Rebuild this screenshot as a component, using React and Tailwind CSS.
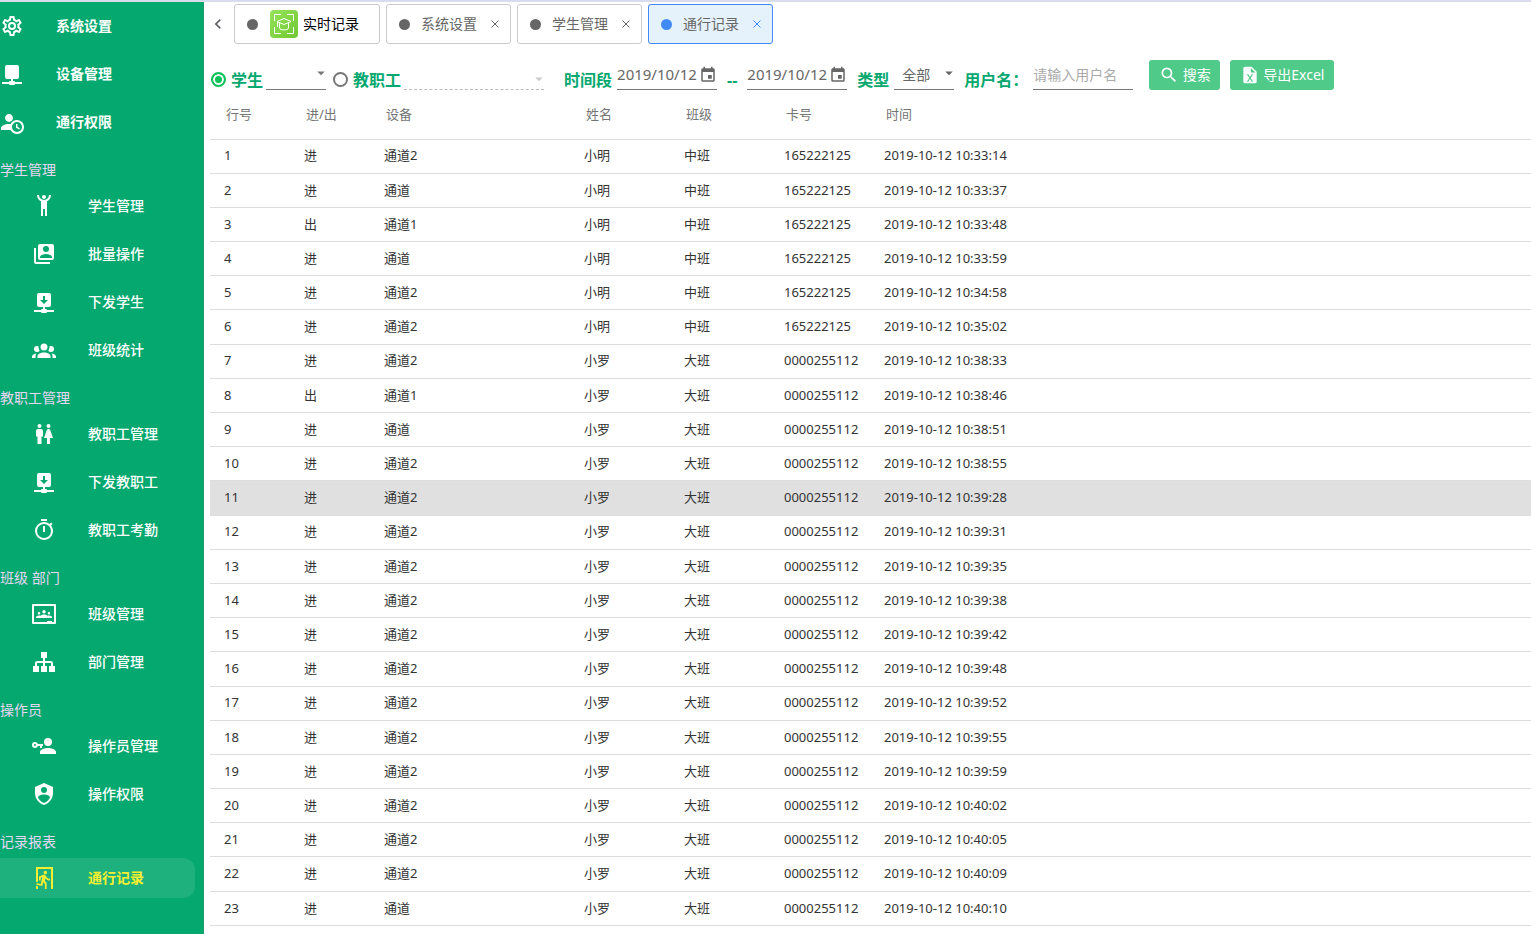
import { useState } from "react";
import { MdEvent, MdSearch, MdArrowDropDown, MdChevronLeft } from "react-icons/md";

const ICONS = {
  cog: "M12,8A4,4 0 0,1 16,12A4,4 0 0,1 12,16A4,4 0 0,1 8,12A4,4 0 0,1 12,8M12,10A2,2 0 0,0 10,12A2,2 0 0,0 12,14A2,2 0 0,0 14,12A2,2 0 0,0 12,10M10,22C9.75,22 9.54,21.82 9.5,21.58L9.13,18.93C8.5,18.68 7.96,18.34 7.44,17.94L4.95,18.95C4.73,19.03 4.46,18.95 4.34,18.73L2.34,15.27C2.21,15.05 2.27,14.78 2.46,14.63L4.57,12.97L4.5,12L4.57,11L2.46,9.37C2.27,9.22 2.21,8.95 2.34,8.73L4.34,5.27C4.46,5.05 4.73,4.96 4.95,5.05L7.44,6.05C7.96,5.66 8.5,5.32 9.13,5.07L9.5,2.42C9.54,2.18 9.75,2 10,2H14C14.25,2 14.46,2.18 14.5,2.42L14.87,5.07C15.5,5.32 16.04,5.66 16.56,6.05L19.05,5.05C19.27,4.96 19.54,5.05 19.66,5.27L21.66,8.73C21.79,8.95 21.73,9.22 21.54,9.37L19.43,11L19.5,12L19.43,13L21.54,14.63C21.73,14.78 21.79,15.05 21.66,15.27L19.66,18.73C19.54,18.95 19.27,19.04 19.05,18.95L16.56,17.95C16.04,18.34 15.5,18.68 14.87,18.93L14.5,21.58C14.46,21.82 14.25,22 14,22H10M11.25,4L10.88,6.61C9.68,6.86 8.62,7.5 7.85,8.39L5.44,7.35L4.69,8.65L6.8,10.2C6.4,11.37 6.4,12.64 6.8,13.8L4.68,15.36L5.43,16.66L7.86,15.62C8.63,16.5 9.68,17.14 10.87,17.38L11.24,20H12.76L13.13,17.39C14.32,17.14 15.37,16.5 16.14,15.62L18.57,16.66L19.32,15.36L17.2,13.81C17.6,12.64 17.6,11.37 17.2,10.2L19.31,8.65L18.56,7.35L16.15,8.39C15.38,7.5 14.32,6.86 13.12,6.62L12.75,4H11.25Z",
  device: "M15,20A1,1 0 0,0 14,19H13V17H17A2,2 0 0,0 19,15V5A2,2 0 0,0 17,3H7A2,2 0 0,0 5,5V15A2,2 0 0,0 7,17H11V19H10A1,1 0 0,0 9,20H2V22H9A1,1 0 0,0 10,23H14A1,1 0 0,0 15,22H22V20H15Z",
  download: "M15,20A1,1 0 0,0 14,19H13V17H17A2,2 0 0,0 19,15V5A2,2 0 0,0 17,3H7A2,2 0 0,0 5,5V15A2,2 0 0,0 7,17H11V19H10A1,1 0 0,0 9,20H2V22H9A1,1 0 0,0 10,23H14A1,1 0 0,0 15,22H22V20H15M11,6H13V10H16L12,14L8,10H11V6Z",
  accountClock: "M10.63,14.1C12.23,10.58 16.38,9.03 19.9,10.63C23.42,12.23 24.97,16.38 23.37,19.9C22.24,22.4 19.75,24 17,24C14.3,24 11.83,22.44 10.67,20H1V18C1.06,16.86 1.84,15.93 3.34,15.18C4.84,14.43 6.72,14.04 9,14C9.57,14 10.11,14.05 10.63,14.1V14.1M9,4C10.12,4.03 11.06,4.42 11.81,5.17C12.56,5.92 12.93,6.86 12.93,8C12.93,9.14 12.56,10.08 11.81,10.83C11.06,11.58 10.12,11.95 9,11.95C7.88,11.95 6.94,11.58 6.19,10.83C5.44,10.08 5.07,9.14 5.07,8C5.07,6.86 5.44,5.92 6.19,5.17C6.94,4.42 7.88,4.03 9,4M17,22A5,5 0 0,0 22,17A5,5 0 0,0 17,12A5,5 0 0,0 12,17A5,5 0 0,0 17,22M16,14H17.5V16.82L19.94,18.23L19.19,19.53L16,17.69V14Z",
  handsUp: "M5,1C5,3.7 6.56,6.16 9,7.32V22H11V15H13V22H15V7.31C17.44,6.16 19,3.7 19,1H17A5,5 0 0,1 12,6A5,5 0 0,1 7,1M12,1C10.89,1 10,1.89 10,3C10,4.11 10.89,5 12,5C13.11,5 14,4.11 14,3C14,1.89 13.11,1 12,1Z",
  accountBoxes: "M4,6H2V20A2,2 0 0,0 4,22H18V20H4V6M20,2A2,2 0 0,1 22,4V16A2,2 0 0,1 20,18H8A2,2 0 0,1 6,16V4A2,2 0 0,1 8,2H20M17,7A3,3 0 0,0 14,4A3,3 0 0,0 11,7A3,3 0 0,0 14,10A3,3 0 0,0 17,7M8,15V16H20V15C20,13 16,11.9 14,11.9C12,11.9 8,13 8,15Z",
  group: "M12,5.5A3.5,3.5 0 0,1 15.5,9A3.5,3.5 0 0,1 12,12.5A3.5,3.5 0 0,1 8.5,9A3.5,3.5 0 0,1 12,5.5M5,8C5.56,8 6.08,8.15 6.53,8.42C6.38,9.85 6.8,11.27 7.66,12.38C7.16,13.34 6.16,14 5,14A3,3 0 0,1 2,11A3,3 0 0,1 5,8M19,8A3,3 0 0,1 22,11A3,3 0 0,1 19,14C17.84,14 16.84,13.34 16.34,12.38C17.2,11.27 17.62,9.85 17.47,8.42C17.92,8.15 18.44,8 19,8M5.5,18.25C5.5,16.18 8.41,14.5 12,14.5C15.59,14.5 18.5,16.18 18.5,18.25V20H5.5V18.25M0,20V18.5C0,17.11 1.89,15.94 4.45,15.6C3.86,16.28 3.5,17.22 3.5,18.25V20H0M24,20H20.5V18.25C20.5,17.22 20.14,16.28 19.55,15.6C22.11,15.94 24,17.11 24,18.5V20Z",
  maleFemale: "M7.5,2A2,2 0 0,1 9.5,4A2,2 0 0,1 7.5,6A2,2 0 0,1 5.5,4A2,2 0 0,1 7.5,2M6,7H9A2,2 0 0,1 11,9V14.5H9.5V22H5.5V14.5H4V9A2,2 0 0,1 6,7M16.5,2A2,2 0 0,1 18.5,4A2,2 0 0,1 16.5,6A2,2 0 0,1 14.5,4A2,2 0 0,1 16.5,2M15,22V16H12L14.59,8.41C14.84,7.59 15.6,7 16.5,7C17.4,7 18.16,7.59 18.41,8.41L21,16H18V22H15Z",
  timer: "M12,20A7,7 0 0,1 5,13A7,7 0 0,1 12,6A7,7 0 0,1 19,13A7,7 0 0,1 12,20M19.03,7.39L20.45,5.97C20,5.46 19.55,5 19.04,4.56L17.62,6C16.07,4.74 14.12,4 12,4A9,9 0 0,0 3,13A9,9 0 0,0 12,22C17,22 21,17.97 21,13C21,10.88 20.26,8.93 19.03,7.39M11,14H13V8H11M15,1H9V3H15V1Z",
  classroom: "M23,2H1A1,1 0 0,0 0,3V21A1,1 0 0,0 1,22H23A1,1 0 0,0 24,21V3A1,1 0 0,0 23,2M22,20H20V19H15V20H2V4H22V20M10.29,9.71A1.71,1.71 0 0,1 12,8C12.95,8 13.71,8.77 13.71,9.71C13.71,10.66 12.95,11.43 12,11.43C11.05,11.43 10.29,10.66 10.29,9.71M5.71,11.29C5.71,10.58 6.29,10 7,10A1.29,1.29 0 0,1 8.29,11.29C8.29,12 7.71,12.57 7,12.57C6.29,12.57 5.71,12 5.71,11.29M15.71,11.29A1.29,1.29 0 0,1 17,10A1.29,1.29 0 0,1 18.29,11.29C18.29,12 17.71,12.57 17,12.57C16.29,12.57 15.71,12 15.71,11.29M20,15.14V16H16L14,16H10L8,16H4V15.14C4,14.2 5.55,13.43 7,13.43C7.55,13.43 8.11,13.54 8.6,13.73C9.35,13.04 10.7,12.57 12,12.57C13.3,12.57 14.65,13.04 15.4,13.73C15.89,13.54 16.45,13.43 17,13.43C18.45,13.43 20,14.2 20,15.14Z",
  sitemap: "M9,2V8H11V11H5C3.89,11 3,11.89 3,13V16H1V22H7V16H5V13H11V16H9V22H15V16H13V13H19V16H17V22H23V16H21V13C21,11.89 20.11,11 19,11H13V8H15V2H9Z",
  accountKey: "M11,10V12H10V14H8V12H5.83C5.42,13.17 4.31,14 3,14A3,3 0 0,1 0,11A3,3 0 0,1 3,8C4.31,8 5.42,8.83 5.83,10H11M3,10A1,1 0 0,0 2,11A1,1 0 0,0 3,12A1,1 0 0,0 4,11A1,1 0 0,0 3,10M16,14C18.67,14 24,15.34 24,18V20H8V18C8,15.34 13.33,14 16,14M16,12A4,4 0 0,1 12,8A4,4 0 0,1 16,4A4,4 0 0,1 20,8A4,4 0 0,1 16,12Z",
  shield: "M12,1L3,5V11C3,16.55 6.84,21.74 12,23C17.16,21.74 21,16.55 21,11V5L12,1M12,5A3,3 0 0,1 15,8A3,3 0 0,1 12,11A3,3 0 0,1 9,8A3,3 0 0,1 12,5M17.13,17C15.92,18.85 14.11,20.24 12,20.92C9.89,20.24 8.08,18.85 6.87,17C6.53,16.5 6.24,16 6,15.47C6,13.82 8.71,12.47 12,12.47C15.29,12.47 18,13.79 18,15.47C17.76,16 17.47,16.5 17.13,17Z",
  exitRun: "M13.34,8.17C12.41,8.17 11.65,7.4 11.65,6.47A1.69,1.69 0 0,1 13.34,4.78C14.28,4.78 15.04,5.54 15.04,6.47C15.04,7.4 14.28,8.17 13.34,8.17M10.3,19.93L4.37,18.75L4.71,17.05L8.86,17.9L10.21,11.04L8.69,11.64V14.5H7V10.54L11.4,8.67L12.07,8.59C12.67,8.59 13.17,8.93 13.5,9.44L14.36,10.79C15.04,12 16.39,12.82 18,12.82V14.5C16.14,14.5 14.44,13.67 13.34,12.4L12.84,14.94L14.61,16.63V23H12.92V17.9L11.14,16.21L10.3,19.93M21,23H19V3H6V16.11L4,15.69V1H21V23M6,23H4V19.78L6,20.2V23Z",
  excel: "M14,2H6A2,2 0 0,0 4,4V20A2,2 0 0,0 6,22H18A2,2 0 0,0 20,20V8L14,2M15.8,20H14L12,16.6L10,20H8.2L11.1,15.5L8.2,11H10L12,14.4L14,11H15.8L12.9,15.5L15.8,20M13,9V3.5L18.5,9H13Z",
};

const TOP_MENU = [
  { icon: "cog", label: "系统设置" },
  { icon: "device", label: "设备管理" },
  { icon: "accountClock", label: "通行权限" },
];

const MENU_GROUPS = [
  {
    title: "学生管理",
    items: [
      { icon: "handsUp", label: "学生管理" },
      { icon: "accountBoxes", label: "批量操作" },
      { icon: "download", label: "下发学生" },
      { icon: "group", label: "班级统计" },
    ],
  },
  {
    title: "教职工管理",
    items: [
      { icon: "maleFemale", label: "教职工管理" },
      { icon: "download", label: "下发教职工" },
      { icon: "timer", label: "教职工考勤" },
    ],
  },
  {
    title: "班级 部门",
    items: [
      { icon: "classroom", label: "班级管理" },
      { icon: "sitemap", label: "部门管理" },
    ],
  },
  {
    title: "操作员",
    items: [
      { icon: "accountKey", label: "操作员管理" },
      { icon: "shield", label: "操作权限" },
    ],
  },
  {
    title: "记录报表",
    items: [{ icon: "exitRun", label: "通行记录", active: true }],
  },
];

const TABS = ["系统设置", "学生管理", "通行记录"];

const XIAOMING = { name: "小明", grade: "中班", card: "165222125" };
const XIAOLUO = { name: "小罗", grade: "大班", card: "0000255112" };

const RECORDS = [
  { ...XIAOMING, dir: "进", device: "通道2", time: "10:33:14" },
  { ...XIAOMING, dir: "进", device: "通道", time: "10:33:37" },
  { ...XIAOMING, dir: "出", device: "通道1", time: "10:33:48" },
  { ...XIAOMING, dir: "进", device: "通道", time: "10:33:59" },
  { ...XIAOMING, dir: "进", device: "通道2", time: "10:34:58" },
  { ...XIAOMING, dir: "进", device: "通道2", time: "10:35:02" },
  { ...XIAOLUO, dir: "进", device: "通道2", time: "10:38:33" },
  { ...XIAOLUO, dir: "出", device: "通道1", time: "10:38:46" },
  { ...XIAOLUO, dir: "进", device: "通道", time: "10:38:51" },
  { ...XIAOLUO, dir: "进", device: "通道2", time: "10:38:55" },
  { ...XIAOLUO, dir: "进", device: "通道2", time: "10:39:28" },
  { ...XIAOLUO, dir: "进", device: "通道2", time: "10:39:31" },
  { ...XIAOLUO, dir: "进", device: "通道2", time: "10:39:35" },
  { ...XIAOLUO, dir: "进", device: "通道2", time: "10:39:38" },
  { ...XIAOLUO, dir: "进", device: "通道2", time: "10:39:42" },
  { ...XIAOLUO, dir: "进", device: "通道2", time: "10:39:48" },
  { ...XIAOLUO, dir: "进", device: "通道2", time: "10:39:52" },
  { ...XIAOLUO, dir: "进", device: "通道2", time: "10:39:55" },
  { ...XIAOLUO, dir: "进", device: "通道2", time: "10:39:59" },
  { ...XIAOLUO, dir: "进", device: "通道2", time: "10:40:02" },
  { ...XIAOLUO, dir: "进", device: "通道2", time: "10:40:05" },
  { ...XIAOLUO, dir: "进", device: "通道2", time: "10:40:09" },
  { ...XIAOLUO, dir: "进", device: "通道", time: "10:40:10" },
];

function Icon({ name, className = "size-6" }) {
  return (
    <svg viewBox="0 0 24 24" fill="currentColor" className={`shrink-0 ${className}`} aria-hidden="true">
      <path d={ICONS[name]} />
    </svg>
  );
}

function Sidebar() {
  return (
    <nav className="w-[204px] shrink-0 bg-[#05a86f] border-r border-[#1c9a6b] pt-1 text-sm text-white">
      {TOP_MENU.map((item) => (
        <a key={item.label} href="#" className="flex items-center h-10 mb-2 gap-8 font-bold">
          <Icon name={item.icon} />
          {item.label}
        </a>
      ))}
      {MENU_GROUPS.map((group) => (
        <div key={group.title}>
          <h2 className="h-9 pt-2 leading-6 text-[#e8d6f5]">{group.title}</h2>
          {group.items.map((item) => (
            <a
              key={item.label}
              href="#"
              className={`flex items-center h-10 mb-2 mr-2 pl-8 gap-8 rounded-r-xl ${item.active ? "bg-white/10 text-[#f5ee32] font-bold" : "font-medium"}`}
            >
              <Icon name={item.icon} />
              {item.label}
            </a>
          ))}
        </div>
      ))}
    </nav>
  );
}

function Logo() {
  return (
    <svg viewBox="0 0 28 28" className="size-7" fill="none" aria-hidden="true">
      <defs>
        <linearGradient id="logo-bg" x1="0" y1="0" x2="1" y2="1">
          <stop offset="0" stopColor="#95e45c" />
          <stop offset="1" stopColor="#70c830" />
        </linearGradient>
      </defs>
      <rect width="28" height="28" rx="4" fill="url(#logo-bg)" />
      <g stroke="#fff">
        <path d="M4.5 11V4.5H11M17 4.5H23.5V11M23.5 17V23.5H17M11 23.5H4.5V17" />
        <path d="M14 8.500L21 11.500L14 14.500L7 11.500ZM9.500 13V18C9.500 20.500 18.500 20.500 18.500 18V13M7.500 12V17" strokeLinejoin="round" />
      </g>
    </svg>
  );
}

function TabBar() {
  const [active, setActive] = useState("通行记录");

  return (
    <div className="flex items-center h-11 gap-1.5 text-sm">
      <button className="flex w-6 justify-end text-[#606266]" title="返回">
        <MdChevronLeft size={20} />
      </button>
      <button className="flex items-center h-10 w-[146px] px-3 border border-[#ccc] rounded-[3px] text-black">
        <span className="size-[11px] rounded-full bg-[#666]" />
        <span className="ml-3 mr-[5px]"><Logo /></span>
        实时记录
      </button>
      {TABS.map((tab) => (
        <div
          key={tab}
          className={`flex items-center h-10 w-[125px] pl-3 border rounded-[3px] ${active === tab ? "bg-[#e6f2fb] border-[#4189f5] text-[#4189f5]" : "border-[#ccc] text-[#666]"}`}
        >
          <button className="flex items-center gap-[11px]" onClick={() => setActive(tab)}>
            <span className="size-[11px] rounded-full bg-current" />
            <span className="text-[#666]">{tab}</span>
          </button>
          <button className="ml-3 p-0.5" title="关闭">
            <svg viewBox="0 0 8 8" className="size-2" stroke="currentColor" aria-hidden="true">
              <path d="M0.5 0.5L7.5 7.5M7.5 0.5L0.5 7.5" />
            </svg>
          </button>
        </div>
      ))}
    </div>
  );
}

function DateField({ label }) {
  return (
    <span className="flex items-center self-start w-[100px] h-[30px] border-b border-[#777]">
      <input aria-label={label} defaultValue="2019/10/12" className="w-[82px] text-[15px] text-[#666] outline-none" />
      <button title="选择日期">
        <MdEvent size={18} className="text-[#666]" />
      </button>
    </span>
  );
}

function Filters() {
  const [kind, setKind] = useState("student");
  const radio = "appearance-none size-[15px] rounded-full border-2 border-[#777] checked:border-[#0cc35a] checked:bg-[#0cc35a] checked:shadow-[inset_0_0_0_2px_white]";

  return (
    <div className="flex items-center h-[45px] pl-[7px] pt-1.5 mt-2 text-sm">
      <label className="flex items-center gap-[5px] text-base font-bold text-[#05a86f]">
        <input type="radio" name="kind" className={radio} checked={kind === "student"} onChange={() => setKind("student")} />
        学生
      </label>
      <span className="relative self-start ml-[3px]">
        <select aria-label="学生班级" className="appearance-none block w-[60px] h-[30px] border-b border-[#777] outline-none" />
        <MdArrowDropDown size={18} className="absolute -right-1 top-1 text-[#777] pointer-events-none" />
      </span>
      <label className="flex items-center gap-[5px] ml-[7px] text-base font-bold text-[#05a86f]">
        <input type="radio" name="kind" className={radio} checked={kind === "staff"} onChange={() => setKind("staff")} />
        教职工
      </label>
      <span className="relative self-start ml-[3px]">
        <select aria-label="教职工部门" disabled className="appearance-none block w-[140px] h-[30px] border-b border-dashed border-[#bbb] outline-none" />
        <MdArrowDropDown size={18} className="absolute -right-1 top-2.5 text-[#ccc] pointer-events-none" />
      </span>
      <span className="ml-5 mr-[5px] text-base font-bold text-[#05a86f]">时间段</span>
      <DateField label="开始日期" />
      <span className="mx-2.5 text-base font-bold text-[#05a86f]">--</span>
      <DateField label="结束日期" />
      <label htmlFor="type" className="ml-2.5 text-base font-bold text-[#05a86f]">类型</label>
      <span className="relative self-start ml-[5px]">
        <select id="type" className="appearance-none block w-[60px] h-[30px] pl-2 border-b border-[#777] text-[#666] outline-none">
          <option>全部</option>
        </select>
        <MdArrowDropDown size={18} className="absolute -right-1 top-1 text-[#666] pointer-events-none" />
      </span>
      <label htmlFor="user" className="ml-2.5 text-base font-bold text-[#05a86f]">用户名：</label>
      <input
        id="user"
        placeholder="请输入用户名"
        className="self-start w-[100px] h-[30px] ml-[5px] border-b border-[#777] outline-none placeholder:text-[#aaa]"
      />
      <button className="flex items-center justify-center self-start gap-1 h-[30px] w-[71px] ml-4 rounded-[3px] bg-[#4fca89] text-white">
        <MdSearch size={20} />
        搜索
      </button>
      <button className="flex items-center justify-center self-start gap-[3px] h-[30px] w-[104px] ml-2.5 rounded-[3px] bg-[#4fca89] text-white">
        <Icon name="excel" className="size-5" />
        导出Excel
      </button>
    </div>
  );
}

function RecordTable() {
  const [selected, setSelected] = useState(11);

  return (
    <table className="w-full h-[827px] table-fixed text-[13px] text-left">
      <colgroup>
        <col className="w-[80px]" />
        <col className="w-[80px]" />
        <col className="w-[200px]" />
        <col className="w-[100px]" />
        <col className="w-[100px]" />
        <col className="w-[100px]" />
        <col />
      </colgroup>
      <thead>
        <tr className="h-10 border-b border-[#ddd] align-top text-[#757575]">
          {["行号", "进/出", "设备", "姓名", "班级", "卡号", "时间"].map((h) => (
            <th key={h} className="pl-4 pt-1.5 font-normal">{h}</th>
          ))}
        </tr>
      </thead>
      <tbody>
        {RECORDS.map((r, i) => (
          <tr
            key={r.time}
            className={`h-[34px] border-b border-[#ddd] text-[#333] ${selected === i + 1 ? "bg-[#e0e0e0]" : ""}`}
            onClick={() => setSelected(i + 1)}
          >
            <td className="pl-3.5">{i + 1}</td>
            <td className="pl-3.5">{r.dir}</td>
            <td className="pl-3.5">{r.device}</td>
            <td className="pl-3.5">{r.name}</td>
            <td className="pl-3.5">{r.grade}</td>
            <td className="pl-3.5">{r.card}</td>
            <td className="pl-3.5">2019-10-12 {r.time}</td>
          </tr>
        ))}
      </tbody>
    </table>
  );
}

export default function App() {
  return (
    <div className="flex min-h-screen bg-white border-t-2 border-[#d8dcec] font-['Noto_Sans','Noto_Sans_CJK_SC',sans-serif]">
      <Sidebar />
      <main className="flex-1 min-w-0">
        <TabBar />
        <Filters />
        <div className="pl-1.5">
          <RecordTable />
        </div>
      </main>
    </div>
  );
}
